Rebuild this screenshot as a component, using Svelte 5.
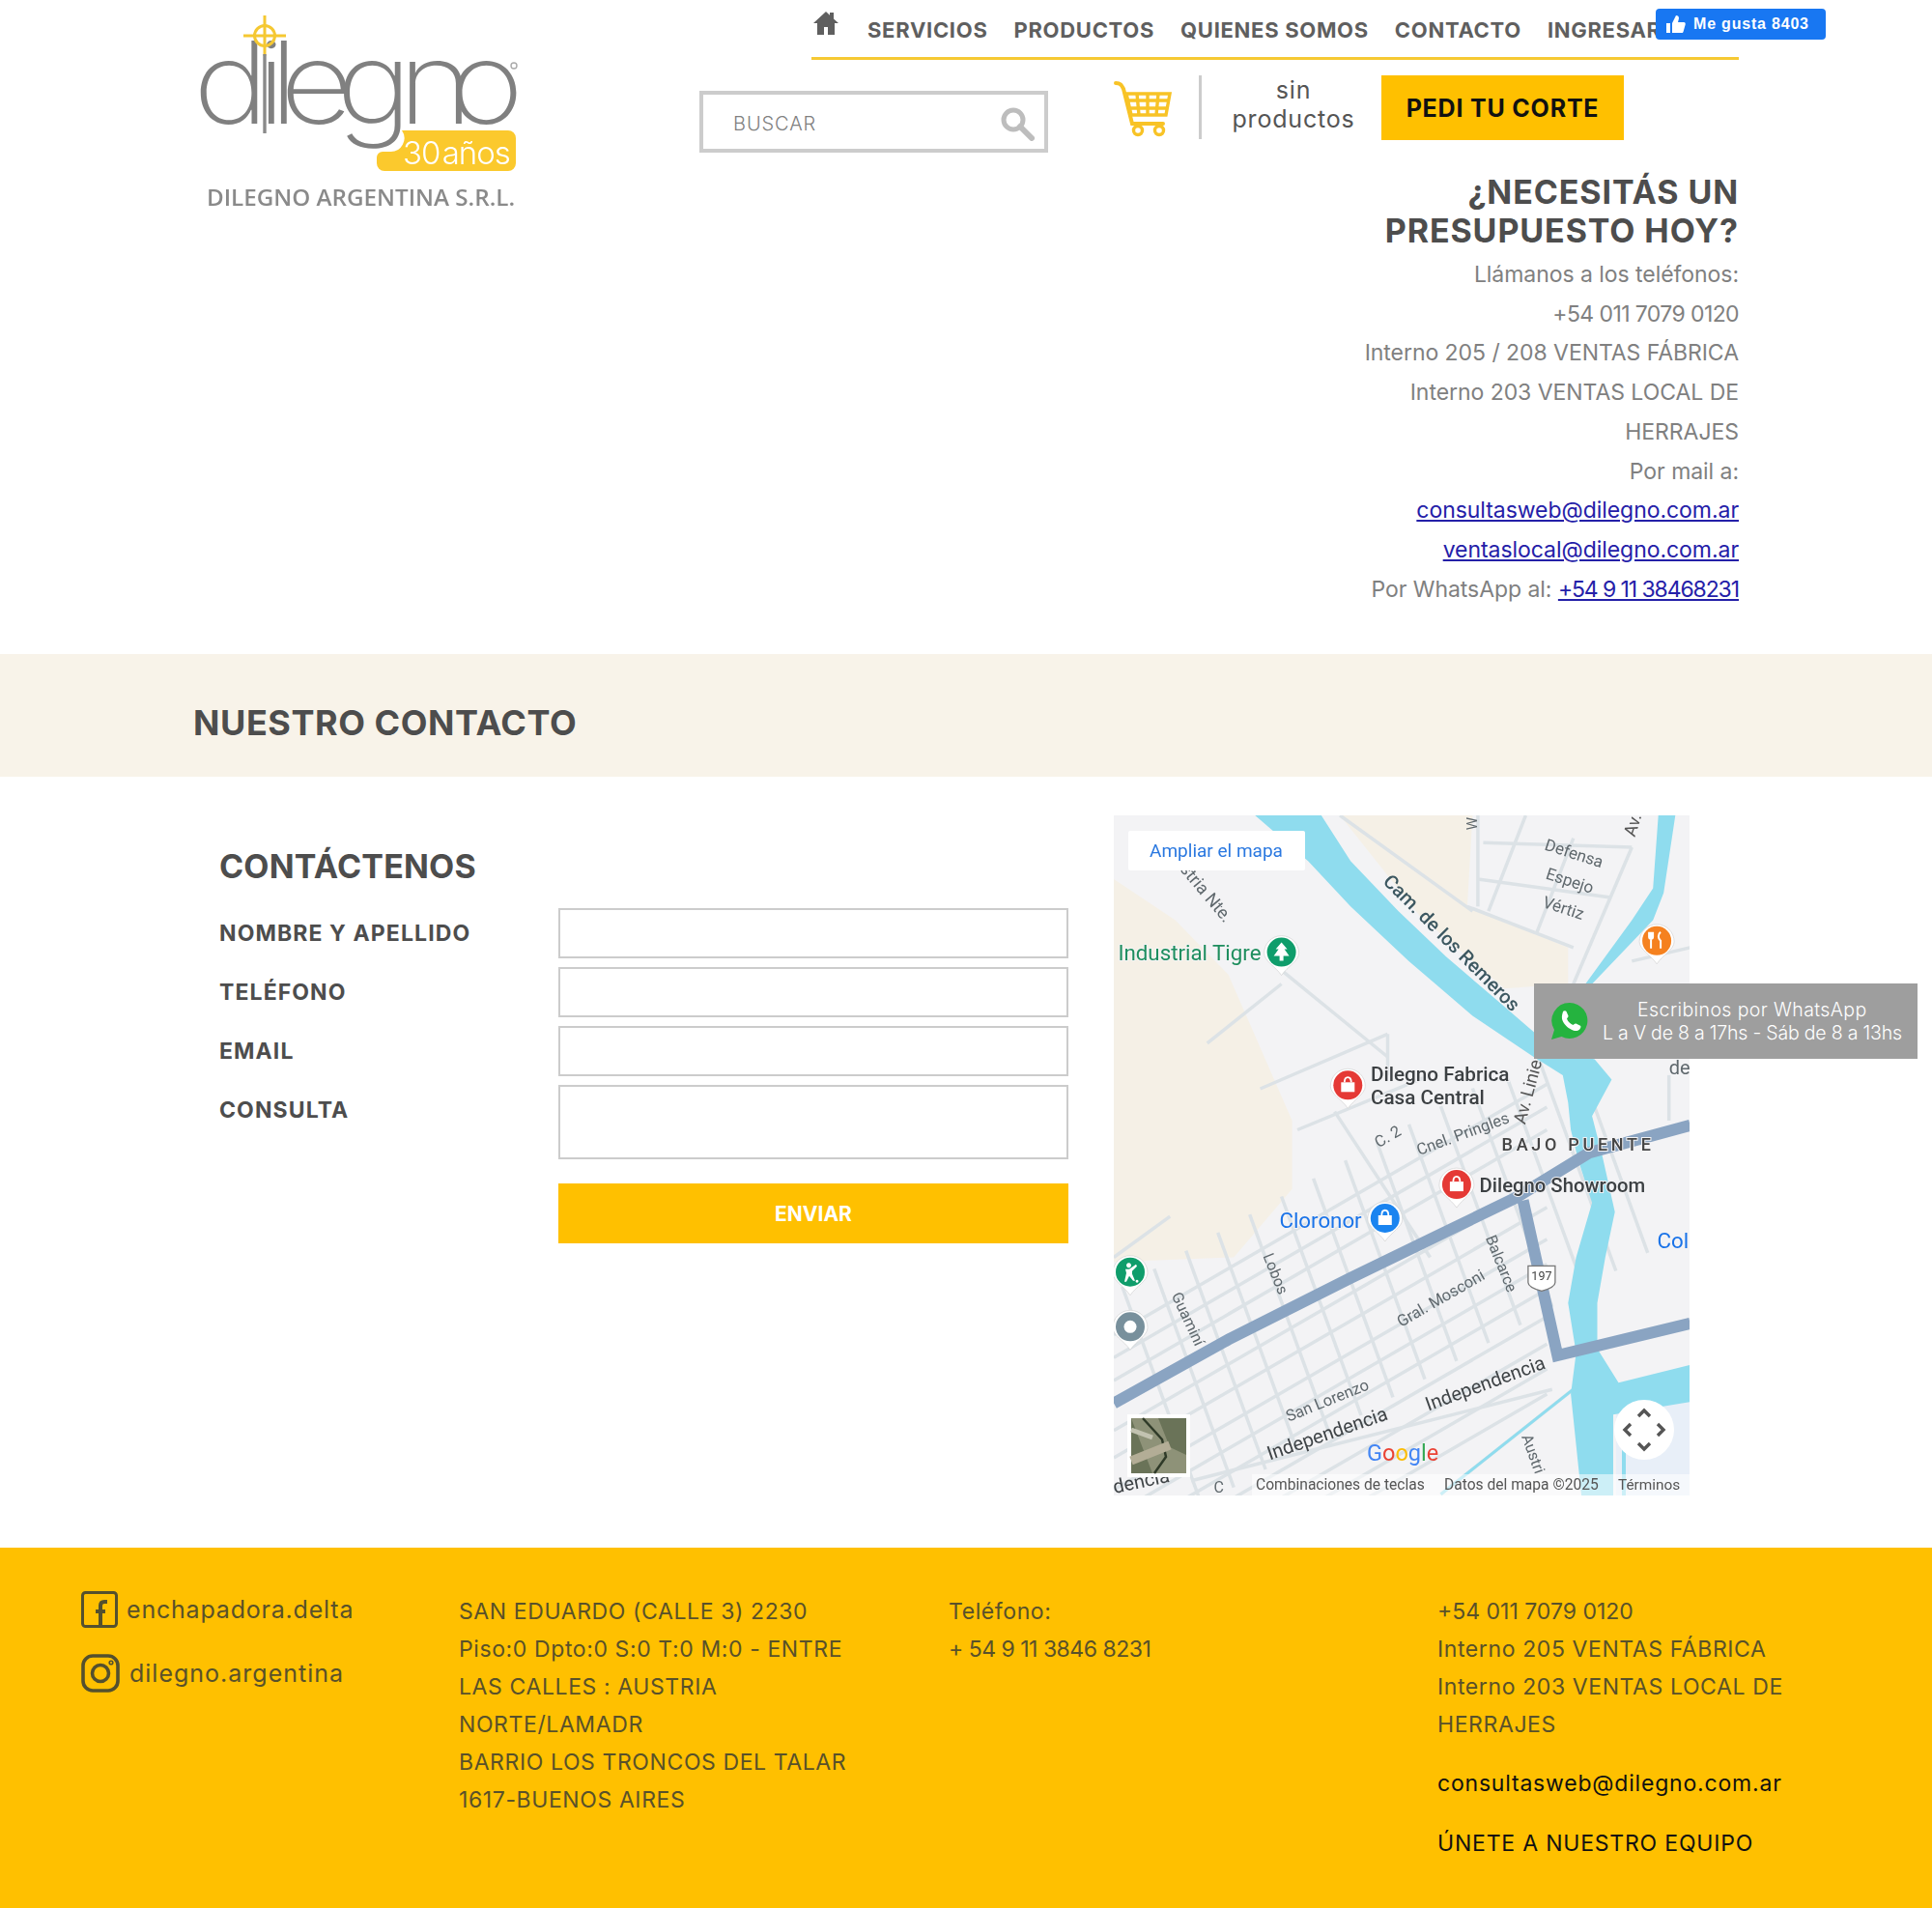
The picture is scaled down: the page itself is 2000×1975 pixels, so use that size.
<script>
  const px = (x) => +((x - 24) / 1.82).toFixed(1);
  const py = (y) => +((y - 30) / 2.12).toFixed(1);
  const pts = (a) => a.map(([x, y]) => `${px(x)},${py(y)}`).join(' ');

  const river = [[290,30],[390,130],[470,230],[580,350],[700,470],[815,560],[870,600],[880,660],[885,720],[900,790],[925,880],[895,1000],[880,1100],[895,1210],[885,1300],[905,1523],[965,1523],[965,1345],[1110,1317],[1110,1236],[975,1275],[935,1200],[935,1100],[950,1000],[968,900],[945,780],[925,690],[962,610],[930,565],[850,540],[925,400],[1040,260],[1060,200],[1082,30],[1050,30],[1040,190],[1000,260],[900,420],[820,510],[760,450],[650,340],[560,240],[470,130],[415,30]];
  const beigeA = [[24,170],[140,260],[240,380],[360,700],[360,850],[250,1000],[24,1010]];
  const beigeB = [[450,30],[700,30],[690,230],[880,320],[880,400],[760,410],[600,250]];
  const hw1 = [[24,1320],[240,1180],[470,1045],[780,870],[920,770],[1110,710]];
  const hw2 = [[795,875],[860,1215],[1110,1145]];

  const roads = [];
  for (const k of [-150, -100, -50, 60, 120, 190, 245, 300, 360, 420, 475, 530]) roads.push([[24, 1320 + k], [840, 770 + k]]);
  for (let i = 0; i < 15; i++) {
    const x = 40 + 60 * i;
    const y = 1075 - 0.66 * (x - 24);
    roads.push([[x, y], [x + 150, y + 480]]);
  }
  roads.push(
    [[340,370],[540,560]],[[200,530],[340,400]],[[300,630],[540,510]],[[540,510],[540,600]],
    [[440,680],[620,1000]],[[370,720],[620,600]],[[710,30],[710,230]],[[800,30],[730,240]],
    [[890,80],[820,290]],[[1000,100],[890,400]],[[720,90],[1000,100]],[[710,170],[960,210]],
    [[690,230],[890,320]],[[1070,600],[1070,700]],[[24,1000],[130,910]],[[170,1490],[850,1290]],
    [[450,30],[700,240]],[[1000,350],[1110,320]],[[640,1520],[900,1280]]
  );

  const labels = [
    { t: 'Cam. de los Remeros', x: 652, y: 320, r: 45, s: 20, c: '#3c5760', w: 500 },
    { t: 'Defensa', x: 888, y: 125, r: 18, s: 17 },
    { t: 'Espejo', x: 880, y: 185, r: 18, s: 17 },
    { t: 'Vértiz', x: 868, y: 245, r: 18, s: 17 },
    { t: 'stria Nte.', x: 190, y: 208, r: 50, s: 18 },
    { t: 'Av.', x: 1012, y: 55, r: -72, s: 18, c: '#555' },
    { t: 'W', x: 708, y: 48, r: -90, s: 15 },
    { t: 'Av. Linie', x: 815, y: 640, r: -75, s: 18.5, c: '#555' },
    { t: 'C. 2', x: 545, y: 745, r: -30, s: 16.5 },
    { t: 'Cnel. Pringles', x: 685, y: 740, r: -20, s: 16.5 },
    { t: 'Lobos', x: 320, y: 1040, r: 68, s: 16 },
    { t: 'Balcarce', x: 745, y: 1018, r: 68, s: 16 },
    { t: 'Guaminí', x: 155, y: 1140, r: 65, s: 16 },
    { t: 'Gral. Mosconi', x: 645, y: 1100, r: -30, s: 16.5 },
    { t: 'San Lorenzo', x: 430, y: 1325, r: -22, s: 16.5 },
    { t: 'Independencia', x: 728, y: 1290, r: -20, s: 20, c: '#3f4447' },
    { t: 'Independencia', x: 430, y: 1400, r: -19, s: 20, c: '#3f4447' },
    { t: 'dencia', x: 78, y: 1505, r: -12, s: 20, c: '#3f4447' },
    { t: 'Austri', x: 805, y: 1435, r: 70, s: 16 },
    { t: 'C', x: 222, y: 1515, r: 0, s: 16 },
    { t: 'de', x: 1090, y: 598, r: 0, s: 20 }
  ];
  const flat = [
    { t: 'Industrial Tigre', x: 32, y: 335, s: 22.3, c: '#1e8e5e', w: 400 },
    { t: 'Dilegno Fabrica', x: 508, y: 602, s: 20.7, c: '#3c4043', w: 500 },
    { t: 'Casa Central', x: 508, y: 652, s: 20.7, c: '#3c4043', w: 500 },
    { t: 'Dilegno Showroom', x: 713, y: 845, s: 20.3, c: '#3c4043', w: 500 },
    { t: 'Cloronor', x: 336, y: 922, s: 22.3, c: '#1a73e8', w: 400 },
    { t: 'Col', x: 1048, y: 968, s: 22.3, c: '#1a73e8', w: 400 }
  ];
  const pins = [
    { x: 465, y: 620, c: '#e53935', g: 'bag' },
    { x: 670, y: 838, c: '#e53935', g: 'bag' },
    { x: 535, y: 912, c: '#1a84f0', g: 'bag' },
    { x: 340, y: 328, c: '#0f9d6b', g: 'tree' },
    { x: 55, y: 1030, c: '#0f9d6b', g: 'golf' },
    { x: 55, y: 1150, c: '#78909c', g: 'dot' },
    { x: 1047, y: 303, c: '#f5811f', g: 'fork' }
  ];

  const footerAddress = ['SAN EDUARDO (CALLE 3) 2230', 'Piso:0 Dpto:0 S:0 T:0 M:0 - ENTRE', 'LAS CALLES : AUSTRIA', 'NORTE/LAMADR', 'BARRIO LOS TRONCOS DEL TALAR', '1617-BUENOS AIRES'];
  const footerPhones = ['Interno 205 VENTAS FÁBRICA', 'Interno 203 VENTAS LOCAL DE', 'HERRAJES'];
  const fields = [
    { label: 'NOMBRE Y APELLIDO', type: 'input' },
    { label: 'TELÉFONO', type: 'input' },
    { label: 'EMAIL', type: 'input' },
    { label: 'CONSULTA', type: 'area' }
  ];
</script>

<div class="page">
  <header class="top">
    <div class="logo">
      <svg width="400" height="225" viewBox="190 0 400 225" aria-label="dilegno">
        <text class="lg-word" transform="scale(1.12 1)" x="178.600 237.500 249 259 311 368 415" y="128">dilegno</text>
        <rect x="272.500" y="20" width="3" height="40" fill="#fff" />
        <g stroke="#f5c832" stroke-width="3" fill="none">
          <circle cx="274" cy="37" r="10.500" />
          <path d="M252 37h44M274 16v42" />
        </g>
        <path d="M274 56v82" stroke="#8a8a8a" stroke-width="3.400" />
        <circle cx="532" cy="68" r="3" fill="none" stroke="#aaa" stroke-width="1.400" />
        <path d="M416 135h110a8 8 0 0 1 8 8v26a8 8 0 0 1-8 8H398a8 8 0 0 1-8-8v-6a6 6 0 0 1 6-6h8a14 14 0 0 0 12-22z" fill="#fbc92d" />
        <text class="lg-30" x="417" y="170">30 años</text>
        <text class="lg-sub" x="214" y="213">DILEGNO ARGENTINA S.R.L.</text>
      </svg>
    </div>

    <div class="head-right">
      <nav class="nav">
        <svg class="home" width="28" height="26" viewBox="0 0 28 26"><path d="M14 1 1 13h4v12h7v-8h4v8h7V13h4l-5-4.600V2h-4v2.800z" fill="#5f5f5f" /></svg>
        <a href="#s">SERVICIOS</a>
        <a href="#p">PRODUCTOS</a>
        <a href="#q">QUIENES SOMOS</a>
        <a href="#c">CONTACTO</a>
        <a href="#i">INGRESAR</a>
      </nav>

      <div class="tools">
        <div class="search">
          <span>BUSCAR</span>
          <svg width="36" height="36" viewBox="0 0 36 36"><circle cx="14" cy="14" r="10" fill="none" stroke="#bdbdbd" stroke-width="5" /><path d="m21 21 12 12" stroke="#bdbdbd" stroke-width="6" stroke-linecap="round" /></svg>
        </div>
        <svg class="cart" width="60" height="60" viewBox="0 0 60 60" fill="none" stroke="#f8c326" stroke-width="3.400">
          <path d="M2 4c5 0 6 2 8 6l9 36h32" stroke-width="4" stroke-linecap="round" />
          <path d="M13 15h45l-4 22H18zM15 22h41M16 30h38M24 15l2 22M35 15v22M46 15l-2 22" />
          <circle cx="25" cy="53" r="4.500" /><circle cx="47" cy="53" r="4.500" />
        </svg>
        <div class="divider"></div>
        <div class="cart-text">sin<br />productos</div>
        <a class="cta" href="#corte">PEDI TU CORTE</a>
      </div>

      <div class="quote">
        <h2>¿NECESITÁS UN<br />PRESUPUESTO HOY?</h2>
        <p>Llámanos a los teléfonos:</p>
        <p class="num">+54 011 7079 0120</p>
        <p>Interno 205 / 208 VENTAS FÁBRICA</p>
        <p>Interno 203 VENTAS LOCAL DE</p>
        <p>HERRAJES</p>
        <p>Por mail a:</p>
        <p><a href="#m1">consultasweb@dilegno.com.ar</a></p>
        <p><a href="#m2">ventaslocal@dilegno.com.ar</a></p>
        <p>Por WhatsApp al: <a class="tight" href="#w">+54 9 11 38468231</a></p>
      </div>
    </div>
  </header>

  <section class="band"><h1>NUESTRO CONTACTO</h1></section>

  <main class="contact">
    <form class="form">
      <h2>CONTÁCTENOS</h2>
      {#each fields as f}
        <div class="row">
          <label for={f.label}>{f.label}</label>
          {#if f.type === 'input'}
            <input id={f.label} type="text" />
          {:else}
            <textarea id={f.label}></textarea>
          {/if}
        </div>
      {/each}
      <button type="button">ENVIAR</button>
    </form>

    <div class="map">
      <svg width="596" height="704" viewBox="0 0 596 704">
        <rect width="596" height="704" fill="#f3f3f5" />
        <polygon points={pts(beigeA)} fill="#f5f0e6" />
        <polygon points={pts(beigeB)} fill="#f5f0e6" />
        <rect x="520" y="600" width="76" height="104" fill="#e8eff8" />
        {#each roads as r}
          <polyline points={pts(r)} fill="none" stroke="#dce2e6" stroke-width="3.500" />
        {/each}
        <polygon points={pts(river)} fill="#8fdcee" />
        <polyline points={pts([[640,1520],[900,1280]])} fill="none" stroke="#8fdcee" stroke-width="3" />
        <polyline points={pts([[985,1523],[985,1400]])} fill="none" stroke="#8fdcee" stroke-width="4" />
        <polyline points={pts(hw1)} fill="none" stroke="#8aa4c2" stroke-width="12" />
        <polyline points={pts(hw2)} fill="none" stroke="#8aa4c2" stroke-width="12" />
        <g transform="translate({px(830)} {py(1042)})">
          <path d="M-14-11h28v17c0 4-7 7-14 9-7-2-14-5-14-9z" fill="#fff" stroke="#777" stroke-width="1.300" />
          <text class="shield" text-anchor="middle" y="4">197</text>
        </g>

        {#each labels as l}
          <text class="mp" text-anchor="middle" font-size={l.s} fill={l.c ?? '#5f686d'} font-weight={l.w ?? 400} transform="translate({px(l.x)} {py(l.y)}) rotate({l.r})">{l.t}</text>
        {/each}
        {#each flat as l}
          <text class="mp halo" x={px(l.x)} y={py(l.y)} font-size={l.s} font-weight={l.w} fill={l.c} dominant-baseline="middle">{l.t}</text>
        {/each}
        <text class="mp bajo" x={px(755)} y={py(765)}>BAJO PUENTE</text>

        {#each pins as p}
          <g transform="translate({px(p.x)} {py(p.y)})">
            <path d="M-18 2a18 18 0 0 1 36 0c0 8-12 14-18 23-6-9-18-15-18-23z" fill="#fff" stroke="#ccc" stroke-width=".600" />
            <circle r="15" cy="1" fill={p.c} />
            {#if p.g === 'bag'}
              <path d="M-7-2h14v10H-7z" fill="#fff" /><path d="M-3.500-2c0-7 7-7 7 0" fill="none" stroke="#fff" stroke-width="1.800" />
            {:else if p.g === 'tree'}
              <path d="M0-9 6-2H3L8 5H2v5h-4V5h-6l5-7h-3z" fill="#fff" />
            {:else if p.g === 'golf'}
              <path d="M-4-6a2.500 2.500 0 1 1 0 .1M-5-2h4l7-5 1 2-5 5v3l3 7H3L-1 5l-3 6h-2l2-9zM7 9a1.500 1.500 0 1 0 .1 0" fill="#fff" />
            {:else if p.g === 'dot'}
              <circle r="6.500" cy="1" fill="#fff" />
            {:else}
              <path d="M-6-8v8M-8-8v5a2 2 0 0 0 4 0v-5M-6 0v9M4-8c-3 2-3 7 0 9v8" fill="none" stroke="#fff" stroke-width="2" />
            {/if}
          </g>
        {/each}

        <rect x="15" y="16" width="183" height="41" rx="2" fill="#fff" />
        <text class="mp" x="106" y="43" text-anchor="middle" font-size="19" fill="#2a78e0">Ampliar el mapa</text>

        <rect x="14" y="620" width="65" height="65" fill="#fff" />
        <rect x="18" y="624" width="57" height="57" fill="#6a7358" />
        <path d="M18 624h28l12 30 17 8v19H40z" fill="#8e9278" />
        <path d="M30 624l20 22 4 18-12 17" fill="none" stroke="#2f3a28" stroke-width="2.500" />
        <path d="M18 668 58 652" stroke="#b3ad96" stroke-width="9" />
        <path d="M18 636l22 8" stroke="#c2c2b0" stroke-width="5" />

        <circle cx="549" cy="636" r="31" fill="#fff" />
        <path d="M543 622l6-6 6 6M543 650l6 6 6-6M535 630l-6 6 6 6M563 630l6 6-6 6" fill="none" stroke="#555" stroke-width="3.400" />

        <text class="mp google" x="262" y="668">
          <tspan fill="#4285f4">G</tspan><tspan fill="#ea4335">o</tspan><tspan fill="#fbbc05">o</tspan><tspan fill="#4285f4">g</tspan><tspan fill="#34a853">l</tspan><tspan fill="#ea4335">e</tspan>
        </text>
        <rect x="143" y="682" width="453" height="22" fill="#fff" opacity=".55" />
        <text class="mp" x="147" y="698" font-size="15.600" fill="#555">Combinaciones de teclas</text>
        <text class="mp" x="342" y="698" font-size="15.600" fill="#555">Datos del mapa ©2025</text>
        <text class="mp" x="522" y="698" font-size="15.400" fill="#555">Términos</text>
      </svg>
    </div>
  </main>

  <footer class="footer">
    <div class="social">
      <div class="soc soc-fb">
        <svg width="38" height="38" viewBox="0 0 38 38" fill="none" stroke="#54502e" stroke-width="3"><rect x="1.500" y="1.500" width="35" height="35" rx="3" /><path d="M27 11h-3c-3 0-4 2-4 4v21M15 21h10" stroke-width="4" /></svg>
        <span>enchapadora.delta</span>
      </div>
      <div class="soc soc-ig">
        <svg width="40" height="40" viewBox="0 0 40 40" fill="none" stroke="#54502e" stroke-width="3.600"><rect x="2" y="2" width="36" height="36" rx="10" /><circle cx="20" cy="20" r="8.500" /><circle cx="31" cy="9" r=".800" /></svg>
        <span>dilegno.argentina</span>
      </div>
    </div>
    <div class="col">
      {#each footerAddress as line}<div>{line}</div>{/each}
    </div>
    <div class="col">
      <div>Teléfono:</div>
      <div class="num">+ 54 9 11 3846 8231</div>
    </div>
    <div class="col">
      <div class="flat">+54 011 7079 0120</div>
      {#each footerPhones as line}<div>{line}</div>{/each}
      <div class="f-link f-first">consultasweb@dilegno.com.ar</div>
      <div class="f-link f-second">ÚNETE A NUESTRO EQUIPO</div>
    </div>
  </footer>

  <a class="fb" href="#fb">
    <svg width="22" height="20" viewBox="0 0 22 20"><path d="M1 9h4v10H1zM7 9l4-8c2 0 3 1 3 3l-1 4h6c2 0 2 2 1.500 3l-2 7c-.3 1-1 1-2 1H7z" fill="#fff" /></svg>
    Me gusta 8403
  </a>

  <a class="wa" href="#wa">
    <svg width="42" height="42" viewBox="0 0 42 42"><path d="M21 2a18.500 18.500 0 0 0-16 28L2 40l10.500-3A18.500 18.500 0 1 0 21 2z" fill="#25b33f" /><path d="M14 11c1-1 3-1 3.500 0l2 4.500c.3 1-1 2-1.500 3 1 3 4 5.500 6.500 6.500 1-.7 2-2 3-1.500l4.500 2.200c1 .8 0 3-1 4-2.500 2.200-6 1.500-10-1-3.500-2-7-6-8-10-.5-3 .5-6 1-7.500z" fill="#fff" /></svg>
    <span class="wa-text"><span class="wa-1">Escribinos por WhatsApp</span><span class="wa-2">L a V de 8 a 17hs - Sáb de 8 a 13hs</span></span>
  </a>
</div>

<style>
  :global(body) { margin: 0; background: #fff; }
  .page { position: relative; width: 2000px; height: 1975px; overflow: hidden; font-family: Inter, "Open Sans", sans-serif; color: #4d4d4d; }
  .top { display: flex; height: 677px; padding-left: 190px; box-sizing: border-box; }
  .logo { width: 534px; }
  .logo svg { display: block; filter: blur(.5px); }
  .lg-word { font-family: Inter, sans-serif; font-size: 118px; font-weight: 200; fill: #808080; }
  .lg-30 { font-family: Inter, sans-serif; font-size: 33px; font-weight: 300; fill: #fff; letter-spacing: -1px; word-spacing: -6px; }
  .lg-sub { font-family: "Open Sans", sans-serif; font-size: 24.200px; font-weight: 600; fill: #8a8a8a; }

  .head-right { width: 1076px; }
  .nav { position: relative; display: flex; align-items: center; gap: 27px; width: 960px; height: 62px; margin-left: 116px; border-bottom: 3px solid #f6c933; box-sizing: border-box; white-space: nowrap; }
  .nav a { color: #5f5f5f; font-size: 22px; font-weight: 650; letter-spacing: .7px; text-decoration: none; padding-top: 2px; }
  .home { position: relative; top: -6px; margin-left: 1px; margin-right: 2px; }
  .tools { display: flex; align-items: flex-start; margin-top: 16px; }
  .search { display: flex; align-items: center; justify-content: space-between; box-sizing: border-box; width: 361px; height: 64px; margin-top: 16px; padding: 3px 10px 0 31px; border: 4px solid #ccc; color: #808080; font-size: 20px; font-weight: 300; letter-spacing: .9px; }
  .cart { margin: 4px 0 0 68px; }
  .divider { width: 3px; height: 66px; margin-left: 28px; background: #ccc; }
  .cart-text { width: 182px; margin-left: 4px; text-align: center; font-size: 25px; letter-spacing: .8px; line-height: 30px; color: #555; }
  .cta { display: flex; align-items: center; justify-content: center; width: 251px; height: 67px; background: #ffc000; color: #111; font-size: 25px; font-weight: 700; letter-spacing: .8px; text-decoration: none; }
  .quote { width: 960px; margin: 21px 0 0 116px; text-align: right; }
  .quote h2 { margin: 0 0 5px; font-size: 34px; line-height: 40px; font-weight: 700; letter-spacing: .9px; color: #4d4d4d; }
  .quote p { margin: 0; font-size: 23px; line-height: 40.700px; color: #808080; white-space: nowrap; letter-spacing: -.05px; }
  .quote p.num { letter-spacing: -.6px; }
  .quote a { color: #2420a8; }
  .quote a.tight { letter-spacing: -1.100px; }

  .band { display: flex; align-items: center; height: 127px; box-sizing: border-box; padding: 15px 0 0 200px; background: #f8f3e9; }
  .band h1 { margin: 0; font-size: 36px; font-weight: 700; letter-spacing: .55px; color: #4d4d4d; }

  .contact { display: flex; gap: 47px; height: 798px; box-sizing: border-box; padding: 40px 0 0 227px; }
  .form { width: 879px; }
  .form h2 { margin: 33px 0 23px; font-size: 34px; line-height: 40px; font-weight: 700; letter-spacing: .2px; color: #4d4d4d; }
  .row { display: flex; margin-bottom: 9px; }
  .row label { width: 351px; font-size: 23px; line-height: 52px; font-weight: 700; letter-spacing: 1.100px; }
  .row input, .row textarea { display: block; width: 528px; height: 52px; box-sizing: border-box; border: 2px solid #ccc; background: #fff; padding: 0 8px; margin: 0; resize: none; }
  .row textarea { height: 77px; }
  .form button { display: block; width: 528px; height: 62px; margin: 25px 0 0 351px; border: 0; background: #ffc000; color: #fff; font-family: inherit; font-size: 21px; font-weight: 700; }
  .map { width: 596px; height: 704px; }
  .map svg { display: block; filter: blur(.55px); }
  .mp { font-family: Roboto, sans-serif; }
  .halo { paint-order: stroke; stroke: #f3f3f5; stroke-width: 2px; }
  .bajo { font-size: 18px; font-weight: 500; letter-spacing: 3.700px; fill: #444; paint-order: stroke; stroke: #f3f3f5; stroke-width: 2px; }
  .shield { font-family: Roboto, sans-serif; font-size: 12.500px; fill: #444; }
  .google { font-size: 23.500px; font-weight: 400; }

  .footer { display: grid; grid-template-columns: 391px 507px 506px 1fr; height: 373px; box-sizing: border-box; padding: 47px 0 0 84px; background: #ffc000; color: #59512a; }
  .soc { display: flex; align-items: center; font-size: 25px; }
  .soc-fb { gap: 9px; margin-top: -2px; letter-spacing: .8px; }
  .soc-ig { gap: 10px; margin-top: 27px; letter-spacing: 1px; }
  .soc svg { flex: none; }
  .col { font-size: 23px; line-height: 39px; letter-spacing: .6px; white-space: nowrap; }
  .col .num { letter-spacing: -.5px; }
  .col .flat { letter-spacing: 0; }
  .f-link { color: #111; letter-spacing: .8px; }
  .f-first { margin-top: 22px; }
  .f-second { margin-top: 23px; }

  .fb { position: absolute; left: 1714px; top: 9px; display: flex; align-items: center; gap: 7px; width: 176px; height: 32px; box-sizing: border-box; padding-left: 10px; border-radius: 4px; background: #1877f2; color: #fff; font-family: "Liberation Sans", sans-serif; font-size: 16px; font-weight: 700; letter-spacing: .8px; text-decoration: none; white-space: nowrap; }
  .wa { position: absolute; left: 1588px; top: 1018px; display: flex; align-items: center; gap: 13px; width: 397px; height: 78px; box-sizing: border-box; padding-left: 16px; background: #9e9e9e; color: #fff; font-size: 19.500px; line-height: 24px; font-weight: 300; text-align: center; text-decoration: none; white-space: nowrap; }
  .wa-1, .wa-2 { display: block; }
  .wa-1 { letter-spacing: .4px; }
  .wa-2 { letter-spacing: -.2px; }
</style>
